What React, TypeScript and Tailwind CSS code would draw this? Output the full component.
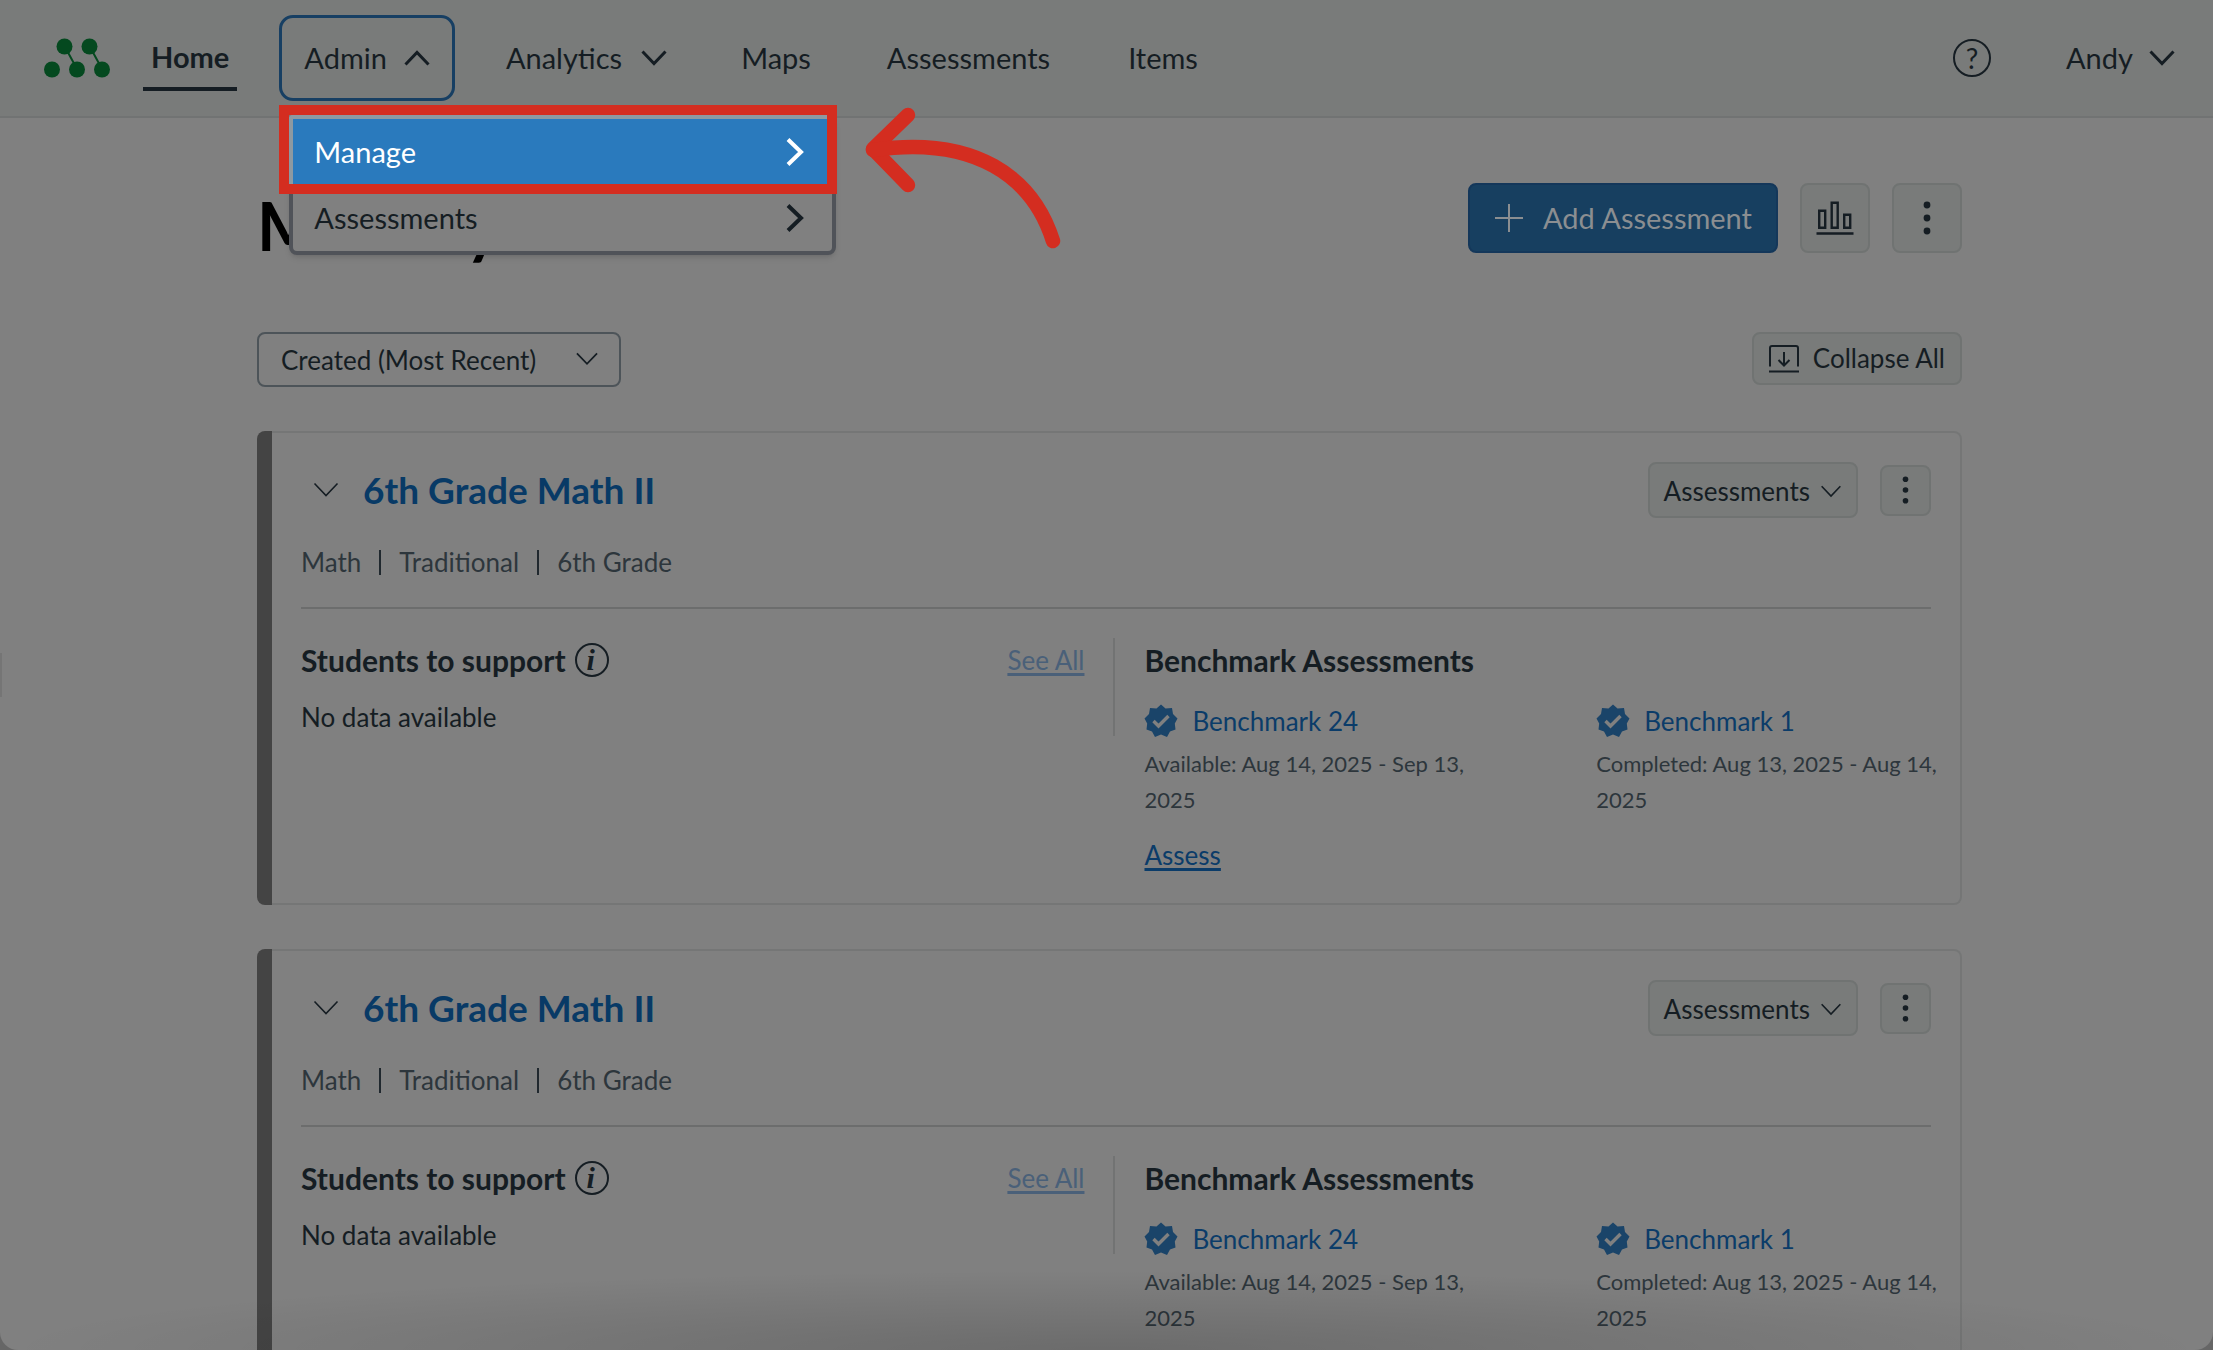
import { useId } from 'react';
import type { ReactNode } from 'react';

type Benchmark = {
  name: string;
  dates: string;
  canAssess?: boolean;
};

const benchmarks: Benchmark[] = [
  { name: 'Benchmark 24', dates: 'Available: Aug 14, 2025 - Sep 13, 2025', canAssess: true },
  { name: 'Benchmark 1', dates: 'Completed: Aug 13, 2025 - Aug 14, 2025' }
];

const courses = [
  { id: 1, title: '6th Grade Math II', tags: ['Math', 'Traditional', '6th Grade'] },
  { id: 2, title: '6th Grade Math II', tags: ['Math', 'Traditional', '6th Grade'] }
];

const Chevron = ({ className = '', stroke = 3 }: { className?: string; stroke?: number }) => (
  <svg viewBox="0 0 26 16" fill="none" stroke="currentColor" strokeWidth={stroke} className={className} aria-hidden="true">
    <path d="M1.5 1.5 13 13.5 24.5 1.5" />
  </svg>
);

const ChevronRight = () => (
  <svg viewBox="0 0 18 28" fill="none" stroke="currentColor" strokeWidth="4" className="h-7 w-[18px]" aria-hidden="true">
    <path d="M2 1.5 15 14 2 26.5" />
  </svg>
);

const Dots = ({ className }: { className: string }) => (
  <svg viewBox="0 0 8 34" fill="currentColor" className={className} aria-hidden="true">
    <circle cx="4" cy="4" r="3.4" />
    <circle cx="4" cy="17" r="3.4" />
    <circle cx="4" cy="30" r="3.4" />
  </svg>
);

const Logo = () => (
  <svg viewBox="0 0 66 40" className="h-10 w-[66px]" fill="#04491f" stroke="#04491f" aria-hidden="true">
    <path d="M20.5 8 33 31M45.5 8 58 31" strokeWidth="2" />
    <g stroke="none">
      <circle cx="20.5" cy="8.5" r="8" />
      <circle cx="45.5" cy="8.5" r="8" />
      <circle cx="8" cy="31.5" r="8" />
      <circle cx="33" cy="31.5" r="8" />
      <circle cx="58" cy="31.5" r="8" />
    </g>
  </svg>
);

const Badge = () => (
  <svg viewBox="0 0 34 34" className="h-[34px] w-[34px]" aria-hidden="true">
    <path
      fill="#1a4469"
      d="M17 0.5 21.5 4.5 28 4 29 10 33.5 14.5 30.8 19.5 31.5 25.5 26 27.5 23 33 17 30.5 11 33 8 27.5 2.5 25.5 3.2 19.5 0.5 14.5 5 10 6 4 12.5 4.5Z"
    />
    <path d="M9.5 17 14.5 22 24.5 12" fill="none" stroke="#808080" strokeWidth="3.4" />
  </svg>
);

const Header = () => (
  <header className="relative flex h-[118px] items-center border-b-2 border-[#717373] bg-[#797b7a] pr-[38px] pl-11 text-[29px]">
    <a href="#home" aria-label="Main page"><Logo /></a>
    <nav className="flex items-center">
      <a href="#home" className="mt-[10px] ml-[33px] border-b-4 border-[#151d23] px-2 pb-[9px] font-bold">Home</a>
      <div className="relative ml-[42px]">
        <button
          type="button"
          aria-expanded="true"
          className="flex h-[86px] items-center gap-[17px] rounded-[14px] border-[3px] border-[#173f63] px-[22px]"
        >
          Admin
          <Chevron className="h-4 w-[26px] rotate-180" />
        </button>
        <AdminMenu />
      </div>
      <button type="button" className="ml-[51px] flex items-center gap-[19px]">
        Analytics
        <Chevron className="h-4 w-[26px]" />
      </button>
      <a href="#maps" className="ml-[74px]">Maps</a>
      <a href="#assessments" className="ml-[76px]">Assessments</a>
      <a href="#items" className="ml-[78px]">Items</a>
    </nav>
    <button
      type="button"
      aria-label="Help"
      className="ml-auto flex h-[38px] w-[38px] items-center justify-center rounded-full border-2 border-[#151d23] text-[28px] leading-none"
    >
      ?
    </button>
    <button type="button" className="ml-[75px] flex items-center gap-4">
      Andy
      <Chevron className="h-4 w-[26px]" />
    </button>
  </header>
);

const AdminMenu = () => (
  <div className="absolute top-[100px] left-[10px] z-10 w-[547px] rounded-lg border-4 border-[#505359] bg-[#808080] shadow-md">
    <a href="#manage" className="flex h-[66px] items-center justify-between bg-[#2a7abd] pr-7 pl-[21px] text-white">
      Manage
      <ChevronRight />
    </a>
    <a href="#admin-assessments" className="flex h-[66px] items-center justify-between pr-7 pl-[21px]">
      Assessments
      <ChevronRight />
    </a>
    <div className="pointer-events-none absolute -top-[14px] -right-[5px] -left-[14px] h-[89px] border-[10px] border-[#d42d20]">
      <div className="h-full rounded-tl border-t-4 border-l-4 border-[#8d99a1]" />
    </div>
    {/* Callout arrow */}
    <svg
      viewBox="0 0 200 146"
      fill="none"
      stroke="#d42d20"
      strokeWidth="14.5"
      strokeLinecap="round"
      strokeLinejoin="round"
      className="pointer-events-none absolute -top-[12px] left-[572px] h-[146px] w-[200px] overflow-visible"
      aria-hidden="true"
    >
      <path d="M43 8 8 42 43 78" />
      <path d="M8 43C110 28 168 70 188 134" />
    </svg>
  </div>
);

const IconButton = ({ label, className, children }: { label: string; className: string; children: ReactNode }) => (
  <button type="button" aria-label={label} className={`flex items-center justify-center rounded-lg border-2 border-[#707372] bg-[#797b7a] ${className}`}>
    {children}
  </button>
);

const PageTitle = () => (
  <div className="flex items-start justify-between">
    <h1 className="text-[66px] leading-[86px] font-bold text-black">Mastery</h1>
    <div className="flex gap-[22px]">
      <button type="button" className="flex h-[70px] items-center gap-[19px] rounded-lg border-2 border-[#14375a] bg-[#173f60] px-6 text-[29px] text-[#8b8e91]">
        <svg viewBox="0 0 30 30" stroke="currentColor" strokeWidth="2" className="h-[30px] w-[30px]" aria-hidden="true">
          <path d="M15 1v28M1 15h28" />
        </svg>
        Add Assessment
      </button>
      <IconButton label="Reports" className="h-[70px] w-[70px]">
        <svg viewBox="0 0 38 34" fill="none" stroke="currentColor" strokeWidth="2.4" className="h-[34px] w-[38px]" aria-hidden="true">
          <path d="M3.2 9.7h6v17h-6zM15.7 1.7h6v25h-6zM28.2 13.7h6v13h-6zM0.5 32.5h37" />
        </svg>
      </IconButton>
      <IconButton label="More options" className="h-[70px] w-[70px]">
        <Dots className="h-[34px] w-2" />
      </IconButton>
    </div>
  </div>
);

const Toolbar = () => {
  const sortId = useId();

  return (
    <div className="mt-[63px] flex items-start justify-between text-[26px]">
      <div className="relative">
        <label htmlFor={sortId} className="sr-only">Sort</label>
        <select id={sortId} className="h-[55px] w-[364px] appearance-none rounded-lg border-2 border-[#4d5459] bg-transparent px-[22px] pt-[2px]">
          <option>Created (Most Recent)</option>
        </select>
        <Chevron stroke={2} className="pointer-events-none absolute top-5 right-[22px] h-[14px] w-6" />
      </div>
      <button type="button" className="flex h-[53px] items-center gap-[14px] rounded-lg border-2 border-[#707372] bg-[#797b7a] px-[15px]">
        <svg viewBox="0 0 30 28" fill="none" stroke="currentColor" strokeWidth="2" className="h-7 w-[30px]" aria-hidden="true">
          <path d="M1 21.5V3q0-2 2-2h24q2 0 2 2v18.5M0 26.5h30M15 7v13M9.5 15l5.5 5.5 5.5-5.5" />
        </svg>
        Collapse All
      </button>
    </div>
  );
};

const BenchmarkItem = ({ name, dates, canAssess }: Benchmark) => (
  <li>
    <a href="#benchmark" className="flex items-center gap-[14px] text-[26px] leading-9 text-[#0b3c69]">
      <Badge />
      {name}
    </a>
    <p className="mt-[7px] text-[22px] leading-9 text-[#2d363c]">{dates}</p>
    {canAssess && (
      <a href="#assess" className="mt-[19px] inline-block text-[26px] leading-9 text-[#0b3c69] underline decoration-[3px] underline-offset-[3px]">Assess</a>
    )}
  </li>
);

const CourseCard = ({ title, tags }: { title: string; tags: string[] }) => (
  <article className="flex rounded-lg">
    <div className="w-[15px] shrink-0 rounded-l-lg bg-[#444]" />
    <div className="min-w-0 flex-1 rounded-r-lg border-2 border-l-0 border-[#757676] px-[29px] pt-[29px] pb-[30px]">
      <div className="flex items-center">
        <button type="button" aria-label="Collapse section" className="ml-3">
          <Chevron stroke={1.6} className="h-4 w-[26px]" />
        </button>
        <h2 className="ml-6 text-[37px] leading-[56px] font-bold text-[#083a66]">
          <a href="#tracker">{title}</a>
        </h2>
        <button type="button" className="ml-auto flex h-14 items-center gap-[10px] rounded-lg border-2 border-[#707372] bg-[#797b7a] px-[14px] pt-[3px] text-[26px]">
          Assessments
          <Chevron stroke={2} className="h-[13px] w-[22px]" />
        </button>
        <IconButton label="Course options" className="ml-[22px] h-[51px] w-[51px]">
          <Dots className="h-[28px] w-[7px]" />
        </IconButton>
      </div>

      <ul className="mt-[26px] flex items-center text-[26px] leading-9 text-[#2d363c]">
        {tags.map((tag, i) => (
          <li key={tag} className="flex items-center">
            {i > 0 && <span className="mx-[18px] h-[25px] w-[2px] bg-[#20282e]" />}
            {tag}
          </li>
        ))}
      </ul>

      <div className="mt-[27px] grid grid-cols-[814fr_815fr] border-t-2 border-[#6c6d6d] pt-[29px]">
        <section className="h-[98px] border-r-2 border-[#727373] pt-[2px] pr-[29px]">
          <div className="flex items-center">
            <h3 className="text-[30px] leading-10 font-bold">Students to support</h3>
            <button
              type="button"
              aria-label="About this list"
              className="ml-[9px] flex h-[34px] w-[34px] items-center justify-center rounded-full border-2 border-[#151d23] pr-[2px] font-['Liberation_Serif',serif] text-[30px] leading-none font-bold italic"
            >
              i
            </button>
            <a href="#students" className="ml-auto text-[26px] leading-9 text-[#4a6079] underline decoration-[3px] underline-offset-[3px]">See All</a>
          </div>
          <p className="mt-[19px] text-[26px] leading-9">No data available</p>
        </section>
        <section className="pt-[2px] pl-[29px]">
          <h3 className="text-[30px] leading-10 font-bold">Benchmark Assessments</h3>
          {/* The date lines run slightly past the card's inner edge */}
          <ul className="-mr-2 mt-[23px] grid grid-cols-2 gap-[109px]">
            {benchmarks.map((item) => (
              <BenchmarkItem key={item.name} {...item} />
            ))}
          </ul>
        </section>
      </div>
    </div>
  </article>
);

const App = () => (
  <div className="h-screen bg-[#666] font-[Lato,sans-serif] text-[#151d23]">
    <div className="relative h-full overflow-hidden rounded-b-[18px] bg-[#808080]">
      <Header />
      <main className="pt-[65px] pr-[251px] pl-[257px]">
        <PageTitle />
        <Toolbar />
        <div className="mt-11 flex flex-col gap-11">
          {courses.map((course) => (
            <CourseCard key={course.id} title={course.title} tags={course.tags} />
          ))}
        </div>
      </main>
      {/* Collapsed side panel handle */}
      <div className="absolute top-[653px] left-0 h-11 w-[2px] bg-[#757575]" />
      {/* Window shade along the bottom edge */}
      <div className="pointer-events-none absolute inset-x-0 bottom-0 h-20 bg-[radial-gradient(ellipse_50%_100%_at_50%_100%,rgba(0,0,0,0.16),transparent)]" />
    </div>
  </div>
);

export default App;
